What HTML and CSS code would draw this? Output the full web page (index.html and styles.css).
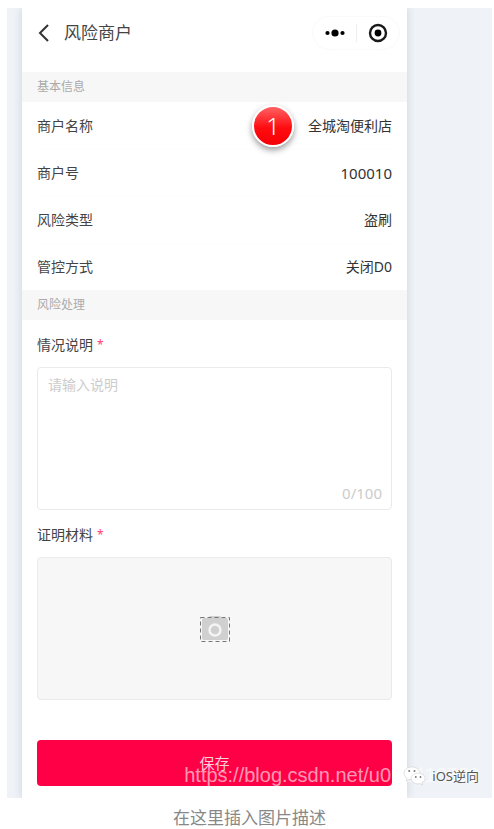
FILE: index.html
```
<!DOCTYPE html>
<html lang="zh-CN">
<head>
<meta charset="utf-8">
<meta name="viewport" content="width=device-width, initial-scale=1">
<title>风险商户</title>
<link rel="stylesheet" href="styles.css">
</head>
<body>
<figure class="figure">
  <div class="stage">
    <main class="screen">
      <header class="header">
        <a class="back" href="#" aria-label="返回">
          <svg width="12" height="18" viewBox="0 0 12 18"><path d="M10 1 2 9l8 8" fill="none" stroke="#333" stroke-width="2"/></svg>
        </a>
        <h1 class="title">风险商户</h1>
        <div class="capsule">
          <button class="capsule-button" type="button" aria-label="更多">
            <svg width="20" height="10" viewBox="0 0 20 10"><circle cx="2.5" cy="5" r="2.1"/><circle cx="10" cy="5" r="3.6"/><circle cx="17.5" cy="5" r="2.1"/></svg>
          </button>
          <button class="capsule-button capsule-close" type="button" aria-label="关闭">
            <svg width="20" height="20" viewBox="0 0 20 20"><circle cx="10" cy="10" r="8" fill="none" stroke="#1a1a1a" stroke-width="2.4"/><circle cx="10" cy="10" r="3.4"/></svg>
          </button>
        </div>
      </header>

      <h2 class="section-title">基本信息</h2>
      <dl class="info">
        <div class="row"><dt>商户名称</dt><dd><span class="step">1</span>全城淘便利店</dd></div>
        <div class="row"><dt>商户号</dt><dd class="number">100010</dd></div>
        <div class="row"><dt>风险类型</dt><dd>盗刷</dd></div>
        <div class="row"><dt>管控方式</dt><dd>关闭D0</dd></div>
      </dl>

      <h2 class="section-title">风险处理</h2>
      <form class="form">
        <label class="label" for="note">情况说明<span class="required">*</span></label>
        <div class="note-box">
          <textarea class="note" id="note" maxlength="100" placeholder="请输入说明"></textarea>
          <span class="counter number">0/100</span>
        </div>
        <label class="label" for="upload">证明材料<span class="required">*</span></label>
        <button class="upload" id="upload" type="button" aria-label="上传图片">
          <svg width="32" height="28" viewBox="0 0 32 28">
            <path d="M3 5q0-2 2-2h4l2-2h10l2 2h4q2 0 2 2v18q0 2-2 2H5q-2 0-2-2z" fill="#d0d0d0"/>
            <circle cx="16" cy="15" r="5.5" fill="none" stroke="#f4f4f4" stroke-width="2.4"/>
            <rect x="1.5" y="2.500" width="29" height="24" fill="none" stroke="#777" stroke-width="1" stroke-dasharray="4 3"/>
          </svg>
        </button>
        <button class="save" type="submit">保存</button>
      </form>
    </main>
    <span class="watermark">https://blog.csdn.net/u012416580</span>
    <span class="account">
      <svg width="23" height="20" viewBox="0 0 23 20">
        <g fill="#fff" stroke="#ccc" stroke-width=".6">
          <path d="M9 1C4.500 1 1 3.700 1 7.200c0 2 1.100 3.700 3 4.900L3.200 15l3-1.600c5.600 1.300 10.800-1.700 10.800-6.200C17 3.700 13.500 1 9 1z"/>
          <path d="M15.200 7.200c-3.900 0-7 2.400-7 5.400 0 3.700 4.400 6.200 9 5l2.400 1.400-.6-2.400c1.900-1.100 3-2.500 3-4.200 0-2.900-2.900-5.200-6.800-5.200z"/>
        </g>
        <g fill="#777"><circle cx="6.200" cy="5" r="1"/><circle cx="11.500" cy="5" r="1"/><circle cx="12.800" cy="11" r=".9"/><circle cx="17.500" cy="11" r=".9"/></g>
      </svg>
      <span>iOS逆向</span>
    </span>
  </div>
  <figcaption class="caption">在这里插入图片描述</figcaption>
</figure>
</body>
</html>
```
FILE: styles.css
```
* {
  box-sizing: border-box;
}

body {
  margin: 0;
  background: #fff;
  color: #444;
  font: 14px/22px "Noto Sans", "Noto Sans CJK SC", sans-serif;
}

button,
textarea {
  margin: 0;
  padding: 0;
  border: 0;
  background: none;
  font: inherit;
}

.figure {
  margin: 8px 2px 0 7px;
}

.stage {
  position: relative;
  padding: 0 85px 0 15px;
  background: #eff2f6;
}

.screen {
  background: #fff;
  box-shadow: 0 0 8px #c9d3e2;
  clip-path: inset(0 -8px);
}

.header {
  display: flex;
  align-items: center;
  height: 64px;
  padding: 0 7px 14px 16px;
}

.back {
  display: flex;
}

.title {
  margin: 0 auto 0 14px;
  color: #444;
  font-size: 17px;
  font-weight: 400;
}

.capsule {
  display: flex;
  align-items: center;
  height: 34px;
  border: 1px solid #fafafa;
  border-radius: 17px;
}

.capsule-button {
  display: flex;
  align-items: center;
  justify-content: center;
  width: 43px;
  height: 18px;
}

.capsule-close {
  border-left: 1px solid #eee;
}

.section-title {
  height: 30px;
  margin: 0;
  padding: 0 15px;
  background: #f7f7f7;
  color: #aaa;
  font-size: 12px;
  font-weight: 400;
  line-height: 30px;
}

.info {
  margin: 0;
}

.row {
  display: flex;
  align-items: center;
  justify-content: space-between;
  height: 47px;
  margin: 0 15px;
}

.row + .row {
  border-top: 1px solid #fdfdfd;
}

.row dd {
  display: flex;
  align-items: center;
  margin: 0;
  color: #333;
}

.number {
  font-size: 15px;
}

.step {
  width: 42px;
  height: 42px;
  margin-right: 14px;
  border: 2px solid #fff;
  border-radius: 50%;
  background: linear-gradient(#ff6264, #ff0c10 55%, #f50005);
  box-shadow: 0 3px 6px #999;
  color: #fff;
  font-size: 24px;
  font-weight: 300;
  line-height: 38px;
  text-align: center;
}

.form {
  padding: 0 15px 12px;
}

.label {
  display: flex;
  padding: 14px 0 11px;
}

.required {
  margin-left: 4px;
  color: #ff3d6e;
  font-size: 12px;
}

.note-box {
  display: flex;
  flex-direction: column;
  height: 143px;
  padding: 6px 9px 5px 10px;
  border: 1px solid #eaeaea;
  border-radius: 4px;
}

.note {
  flex: 1;
  width: 100%;
  resize: none;
  outline: 0;
}

.note::placeholder {
  color: #ccc;
}

.counter {
  align-self: flex-end;
  color: #ccc;
}

.upload {
  display: flex;
  align-items: center;
  justify-content: center;
  width: 100%;
  height: 143px;
  border: 1px solid #eaeaea;
  border-radius: 4px;
  background: #f7f7f7;
}

.save {
  display: block;
  width: 100%;
  height: 46px;
  margin-top: 40px;
  border-radius: 4px;
  background: #ff0046;
  color: #ffd0dc;
  font-size: 15px;
}

.watermark {
  position: absolute;
  right: 12px;
  bottom: 12px;
  color: rgba(255, 255, 255, 0.6);
  font: 20px/22px "Liberation Sans", sans-serif;
}

.account {
  position: absolute;
  right: 13px;
  bottom: 11px;
  display: flex;
  align-items: center;
  gap: 6px;
  color: #555;
  font-size: 13px;
  text-shadow: -1px -1px 0 #fff;
}

.caption {
  color: #888;
  font-size: 17px;
  padding-top: 9px;
  text-align: center;
}
```
